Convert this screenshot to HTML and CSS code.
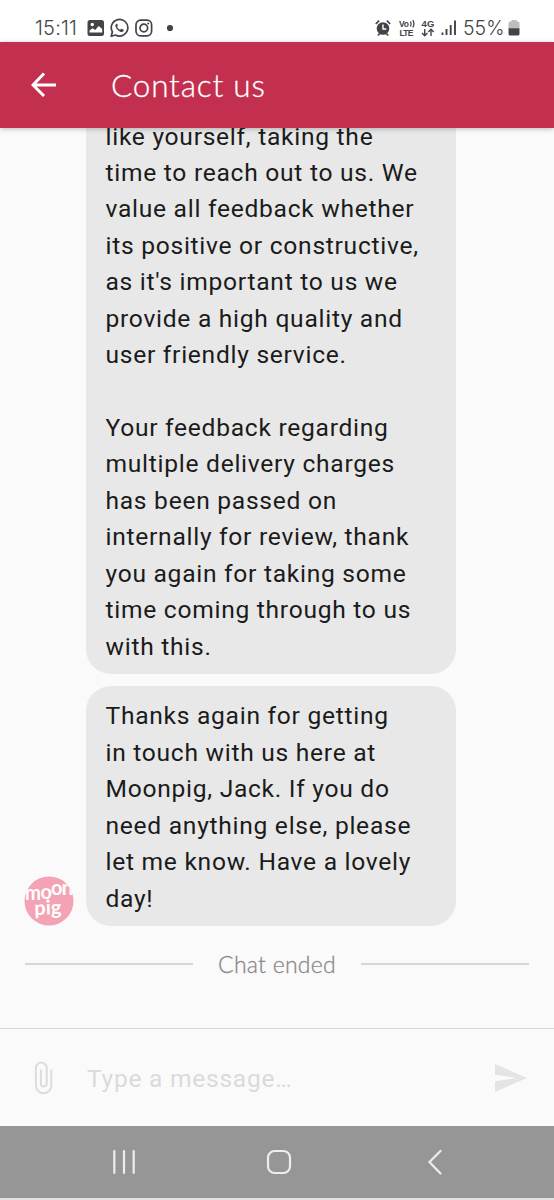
FILE: index.html
```
<!DOCTYPE html>
<html lang="en">
<head>
<meta charset="utf-8">
<title>Contact us</title>
<link rel="stylesheet" href="styles.css">
</head>
<body>
<div class="screen">
  <div class="status">
    <span class="clock">15:11</span>
    <svg class="status-left" width="90" height="20" viewBox="0 0 90 20">
      <rect x="0.5" y="2" width="16.5" height="16" rx="2.5" fill="#444"/>
      <circle cx="5.3" cy="6.5" r="1.7" fill="#fff"/>
      <path d="M2.5 14.5v-2l3-2.3 2.7 1.8 3.5-4 3.5 3v3.500z" fill="#fff"/>
      <path d="M24.200 18.200l1.200-4.300a8.300 8.300 0 1 1 3.200 3.100z" fill="none" stroke="#444" stroke-width="1.700" stroke-linejoin="round"/>
      <path d="M29.300 6c-1.800 1-.7 3.700 1.300 5.700 2 2 4.700 3.200 5.800 1.500.6-1 .3-1.400-.2-1.700l-1.500-.8c-.5-.2-.8.2-1.500 1-1.500-.6-2.500-1.500-3.100-2.900.6-.7.900-.9.700-1.500l-.6-1.300c-.2-.300-.6-.200-.900 0z" fill="#444"/>
      <rect x="49" y="2.200" width="15.600" height="15.600" rx="4.500" fill="none" stroke="#444" stroke-width="1.700"/>
      <circle cx="56.800" cy="10" r="3.800" fill="none" stroke="#444" stroke-width="1.700"/>
      <circle cx="61.200" cy="5.600" r="1" fill="#444"/>
      <circle cx="83" cy="10" r="3.100" fill="#444"/>
    </svg>
    <svg class="status-right" width="84" height="22" viewBox="0 0 84 22">
      <circle cx="8" cy="11.500" r="6.300" fill="#444"/>
      <path d="M8 7.500v4.500h3.300" fill="none" stroke="#fff" stroke-width="1.400"/>
      <path d="M.8 7l3.300-3.300M15.200 7l-3.300-3.300M2.800 18.500l2-2M13.200 18.500l-2-2" stroke="#444" stroke-width="1.700"/>
      <g class="tiny">
        <text x="24" y="9.800" textLength="10">Vo</text>
        <text x="24.500" y="19" textLength="14">LTE</text>
        <text class="gen" x="46.500" y="10" textLength="13">4G</text>
      </g>
      <path d="M35.500 4.500q1.300 2.500 0 5M37.800 3.200q2.300 3.500 0 7.300" fill="none" stroke="#444" stroke-width="1.300"/>
      <path d="M49.700 12v6.500M47 16l2.700 2.700 2.700-2.700M56 19v-6.500M53.300 15l2.700-2.700 2.700 2.700" fill="none" stroke="#444" stroke-width="1.400"/>
      <path d="M67.500 15.500v2.500M71.500 12v6M75.700 8v10M80 3.500v14.500" stroke="#444" stroke-width="1.900"/>
    </svg>
    <span class="percent">55%</span>
    <svg class="battery" width="12" height="16" viewBox="0 0 12 16">
      <path d="M3.500 0h5v1.500h1.500a1.500 1.500 0 0 1 1.500 1.500v5.500H.5V3A1.500 1.500 0 0 1 2 1.500h1.500z" fill="#bdbdbd"/>
      <path d="M.5 8.200h11v5.800a1.500 1.500 0 0 1-1.500 1.500H2A1.500 1.500 0 0 1 .5 14z" fill="#444"/>
    </svg>
  </div>
  <header class="bar">
    <svg class="back" width="26" height="26" viewBox="0 0 26 26"><path d="M13 1.500L2 13l11 11M2 13h23" fill="none" stroke="#fff" stroke-width="3"/></svg>
    <h1 class="title">Contact us</h1>
  </header>
  <main class="chat">
    <div class="messages">
      <svg class="avatar" width="50" height="50" viewBox="0 0 50 50">
        <defs><clipPath id="disc"><circle cx="25" cy="25" r="24.500"/></clipPath></defs>
        <circle cx="25" cy="25" r="24.500" fill="#f3a3b3"/>
        <g class="logo" clip-path="url(#disc)">
          <text x="1" y="23.500" textLength="16" lengthAdjust="spacingAndGlyphs">m</text>
          <text x="16.500" y="22.500" textLength="11.500" lengthAdjust="spacingAndGlyphs">o</text>
          <text x="27" y="18.500" textLength="11.500" lengthAdjust="spacingAndGlyphs">o</text>
          <text x="37.500" y="19" textLength="12" lengthAdjust="spacingAndGlyphs">n</text>
          <text x="10.500" y="38.500" textLength="27" lengthAdjust="spacingAndGlyphs" transform="rotate(-2 24 38)">pig</text>
        </g>
      </svg>
      <div class="bubbles">
        <p class="bubble">like yourself, taking the<br>time to reach out to us. We<br>value all feedback whether<br>its positive or constructive,<br>as it's important to us we<br>provide a high quality and<br>user friendly service.<br><br>Your feedback regarding<br>multiple delivery charges<br>has been passed on<br>internally for review, thank<br>you again for taking some<br>time coming through to us<br>with this.</p>
        <p class="bubble">Thanks again for getting<br>in touch with us here at<br>Moonpig, Jack. If you do<br>need anything else, please<br>let me know. Have a lovely<br>day!</p>
      </div>
    </div>
    <div class="ended"><span class="rule"></span><span class="ended-text">Chat ended</span><span class="rule"></span></div>
  </main>
  <div class="composer">
    <svg class="clip" width="20" height="36" viewBox="0 0 20 36"><path d="M17.300 9.500v16a7.700 7.700 0 0 1-15.400 0V8a5.300 5.300 0 0 1 10.800 0v15.500a2.900 2.900 0 0 1-5.800 0V9.500" fill="none" stroke="#dcdcdc" stroke-width="2"/></svg>
    <span class="placeholder">Type a message…</span>
    <svg class="send" width="32" height="28" viewBox="0 0 32 28"><path d="M0 0l32 14L0 28V17.300L22 14 0 10.700z" fill="#e4e4e4"/></svg>
  </div>
  <nav class="nav">
    <svg width="554" height="72" viewBox="0 0 554 72" fill="none" stroke="#ededed">
      <path d="M114.300 25v22M124 25v22M133.700 25v22" stroke-width="2.200" stroke-linecap="round"/>
      <rect x="268" y="25" width="22" height="22" rx="6.500" stroke-width="2.200"/>
      <path d="M440.500 25L429.500 36l11 11.500" stroke-width="2.200" stroke-linecap="round"/>
    </svg>
  </nav>
</div>
</body>
</html>
```
FILE: styles.css
```
* { box-sizing: border-box; }
body { margin: 0; background: #fafafa; font-family: Roboto, sans-serif; }
.screen { width: 554px; height: 1200px; display: flex; flex-direction: column; overflow: hidden; background: #fafafa; }
.status { height: 41.5px; flex: none; display: flex; align-items: center; padding: 14px 0 0 35px; background: #fff; color: #444; }
.clock { width: 52px; font-family: Inter, sans-serif; font-weight: 300; font-size: 20px; line-height: 24px; letter-spacing: 0.2px; }
.status-left { flex: none; }
.status-right { flex: none; margin-left: 198px; }
.tiny { font-family: "Liberation Sans", sans-serif; font-size: 8.5px; font-weight: 700; fill: #444; }
.gen { font-size: 9.5px; }
.percent { width: 44px; margin-left: 4px; font-family: Inter, sans-serif; font-weight: 300; font-size: 19.5px; line-height: 24px; white-space: nowrap; }
.battery { flex: none; margin-left: 1px; }
.bar { position: relative; z-index: 1; height: 86px; flex: none; display: flex; align-items: center; padding-left: 31px; background: #c32f4f; box-shadow: 0 1px 5px rgba(0, 0, 0, 0.25); }
.back { flex: none; }
.title { margin: 0 0 0 54px; font-family: Lato, sans-serif; font-weight: 300; font-size: 31.5px; letter-spacing: 0.8px; color: #fff; white-space: nowrap; -webkit-text-stroke: 0.3px #fff; }
.chat { flex: 1; min-height: 0; display: flex; flex-direction: column; justify-content: flex-end; padding: 0 25px 51px 24px; }
.messages { display: flex; align-items: flex-end; gap: 12px; }
.avatar { flex: none; }
.logo { font-family: Lato, sans-serif; font-weight: 700; font-size: 20px; fill: #fff; }
.bubbles { width: 369.5px; display: flex; flex-direction: column; gap: 12px; }
.bubble { margin: 0; padding: 12.5px 0 9px 19.5px; border-radius: 25px; background: #e8e8e8; color: #1b1b1b; font-size: 24.6px; line-height: 36.42px; letter-spacing: 0.72px; white-space: nowrap; }
.ended { display: flex; align-items: center; gap: 25px; height: 26px; margin: 25px 0 0 1px; }
.rule { flex: 1; height: 1.5px; background: #d6d6d6; }
.ended-text { font-family: Lato, sans-serif; font-weight: 300; font-size: 23px; line-height: 26px; letter-spacing: 0.25px; color: #888; -webkit-text-stroke: 0.3px #888; }
.composer { height: 98px; flex: none; display: flex; align-items: center; padding: 0 26px 0 34px; border-top: 1px solid #d6d6d6; }
.clip { flex: none; }
.placeholder { flex: 1; margin-left: 33px; padding-top: 1px; font-size: 24.6px; letter-spacing: 0.72px; color: #dadada; }
.send { flex: none; margin-right: 1px; }
.nav { height: 74px; flex: none; background: #969696; border-bottom: 2px solid #e2e2e2; }
.nav svg { display: block; }
```
